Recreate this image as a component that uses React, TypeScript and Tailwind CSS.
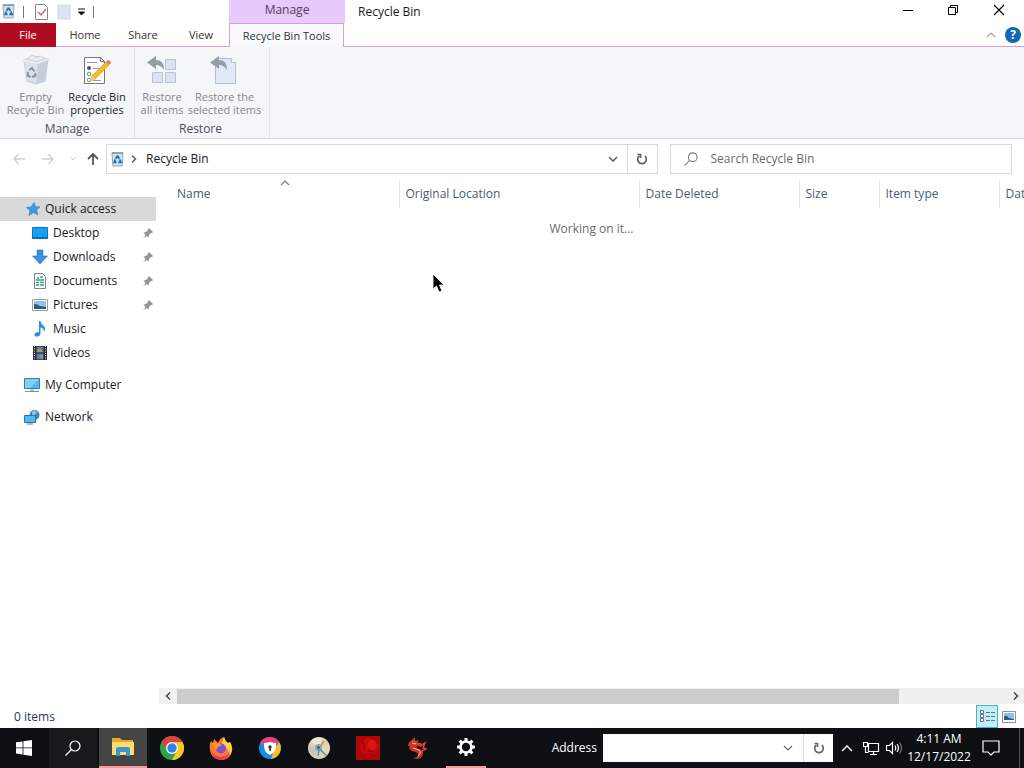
import React from "react";

type IconProps = { className?: string };

const RecycleIcon = ({ className }: IconProps) => (
  <svg className={className} width="13" height="15" viewBox="0 0 14 16">
    <path d="M1 1h12l-1 14H2z" fill="#d3e0ea" stroke="#93a3b2" />
    <path d="M1 1h12" stroke="#7d8f9f" strokeWidth="1.500" />
    <path d="M7 4l2 3.200M7 4L5 7.200M4.500 8L3.500 11H6M9.500 8l1.200 3H8" fill="none" stroke="#1674bd" strokeWidth="2" />
  </svg>
);

const BigBinIcon = () => (
  <svg width="28" height="32" viewBox="0 0 28 32">
    <path d="M2 6l10-4 14 3-3 22-9 3-9-3z" fill="#d0d8e6" stroke="#c0c8d6" />
    <path d="M2 6l13 3-1 20-9-3z" fill="#dce2ec" />
    <path d="M16 10l9-3-3 19-7 3z" fill="#c5cddd" />
    <path d="M2 6l13 3 11-4" fill="none" stroke="#f1f3f8" strokeWidth="1.500" />
    <path d="M5 5l5-4 4 2 5-1 4 3-8 3z" fill="#e9ecf2" stroke="#cbd1dc" />
    <path d="M7 16l3-2 2.500 3.500M6 18l-.500 3.500 3 1.500M10 23l3-1 .500-3" fill="none" stroke="#8491a8" strokeWidth="2" />
  </svg>
);

const PropertiesIcon = () => (
  <svg width="30" height="32" viewBox="0 0 30 32">
    <path d="M2.500 3.500h16l4 4v22h-20z" fill="#fff" stroke="#777" />
    <path d="M18.500 3.500v4h4" fill="none" stroke="#777" />
    <path d="M5 8.500h10M11 14.500h6M11 20.500h5M11 26.500h8" stroke="#999" />
    <circle cx="7" cy="14" r="2" fill="#555" />
    <circle cx="7" cy="20" r="1.800" fill="#fff" stroke="#4ba583" />
    <circle cx="7" cy="26" r="1.800" fill="#fff" stroke="#4ba583" />
    <path d="M8 27l2-5L24 8l3 3-14 14z" fill="#f6bd28" stroke="#d99a1c" strokeWidth=".7" />
    <path d="M24 8l1.500-1.500q2-1 3 1t-1 3L27 11z" fill="#e0736e" />
    <path d="M8 27l2-5 3 3z" fill="#eccf9b" />
  </svg>
);

const undoArrow = "M0 8.500L9 2v4q8 0 8 9v1q-3-5-8-5v4z";

const RestoreAllIcon = () => (
  <svg width="30" height="32" viewBox="0 0 30 32">
    <g fill="#dbe3f2" stroke="#b9c3d4">
      <path d="M18.500 5.500h10v10h-10zM5.500 18.500h10v10h-10zM18.500 18.500h10v10h-10z" />
    </g>
    <path d={undoArrow} fill="#949daa" />
  </svg>
);

const RestoreSelectedIcon = () => (
  <svg width="30" height="32" viewBox="0 0 30 32">
    <path d="M5.500 4.500h16l4 4v21h-20z" fill="#e2e9f6" stroke="#b3bdce" />
    <path d="M21.500 4.500v4h4" fill="#fff" stroke="#b3bdce" />
    <path d={undoArrow} fill="#949daa" />
  </svg>
);

const Search = ({ className, size = 14 }: IconProps & { size?: number }) => (
  <svg className={className} width={size} height={size} viewBox="0 0 16 16" fill="none" stroke="currentColor" strokeWidth="1.200">
    <circle cx="10" cy="6" r="5" />
    <path d="M6.500 9.500L.500 15.500" />
  </svg>
);

const Chevron = ({ d, className, weight = 1.6 }: { d: string; className?: string; weight?: number }) => (
  <svg className={className} width="12" height="12" viewBox="0 0 12 12" fill="none" stroke="currentColor" strokeWidth={weight}>
    <path d={d} />
  </svg>
);
const down = "M2 4l4 4 4-4";
const up = "M2 8l4-4 4 4";
const wideUp = "M1 9l5-5 5 5";
const left = "M8 2.500L4.500 6 8 9.500";
const right = "M4 2.500L7.500 6 4 9.500";

const Refresh = () => (
  <svg width="14" height="14" viewBox="0 0 14 14" fill="none" stroke="currentColor" strokeWidth="1.700">
    <path d="M10 4.200A4.300 4.300 0 1 1 4 4.200M2.500 2.500h3v3.500" />
  </svg>
);

const Pin = () => (
  <svg width="12" height="12" viewBox="0 0 12 12" fill="#8f979e">
    <path d="M7 1l4 4-1 1H9L7 8l-.500 2.500L4.500 9 1 11.500 3.500 8 1.500 5.500 4 5l2-2V2z" />
  </svg>
);

const icons: Record<string, React.ReactNode> = {
  star: <path d="M9 1.500l1.500 4 4.500.500-3.500 3 1.500 5-4.500-2.500L4 14.500l1-5L1.500 6.500 6 6z" fill="#3d9be0" stroke="#247bc0" strokeWidth=".6" />,
  desktop: <><path d="M.500 2.500h15v11H.500z" fill="#14a0f0" stroke="#0876c4" /><path d="M1 12.500h14" stroke="#075b99" strokeDasharray="2 1" /></>,
  downloads: <path d="M5 1h6v6h4.500L8 15 .500 7H5z" fill="#3a90d9" stroke="#2776bf" strokeWidth=".6" />,
  documents: <><path d="M2.500.500h8l3 3v12h-11z" fill="#fff" stroke="#7c8a88" /><path d="M5 5h2M8 4h3M4 7h8M4 9.500h3M8 9.500h4M4 12h3M8 12h4" stroke="#35a187" strokeWidth="1.300" /></>,
  pictures: <><path d="M.500 2.500h15v11H.500z" fill="#fff" stroke="#9aa2aa" /><path d="M2 4h12v8H2z" fill="#8fc5ed" /><path d="M2 7q4 0 6 2l6 1v2H2z" fill="#34587c" /></>,
  music: <path d="M7 0h1.500Q9 3.500 12 5q2 2 0 6 0-4-3.500-4.500V12q0 3-3 3.500Q2 16 2.500 13.500 3 11 7 11z" fill="#2195dc" />,
  videos: <><path d="M1 1h14v14H1z" fill="#282b34" /><path d="M4.500 1.500h7v6h-7zM4.500 8.500h7v6h-7z" fill="#6670b8" /><path d="M5 5l3-2 3 4H5zM6 11l5-1v4z" fill="#93a846" /><path d="M2.500 1v14M13.500 1v14" stroke="#e8e8e8" strokeDasharray="1 1.300" /></>,
  computer: <><path d="M.500 1.500h15v10H.500z" fill="#58b7eb" stroke="#2f7fae" /><path d="M1 2h14L6 11H1z" fill="#83cff6" /><path d="M6 13h4M1 14.500h14" stroke="#77909e" /></>,
  network: <><circle cx="10.500" cy="6" r="5" fill="#3c89b5" /><path d="M8 3q3-3 5 0l-2 3-3 0z" fill="#8dc3d7" /><path d="M.500 6.500h11v7H.500z" fill="#54b7ee" stroke="#2476ac" /><path d="M3 15h6" stroke="#54748a" /></>,
};

const NavIcon = ({ name }: { name: string }) => (
  <svg className="shrink-0" width="16" height="16" viewBox="0 0 16 16">{icons[name]}</svg>
);

const places = [
  ["desktop", "Desktop", true],
  ["downloads", "Downloads", true],
  ["documents", "Documents", true],
  ["pictures", "Pictures", true],
  ["music", "Music", false],
  ["videos", "Videos", false],
] as const;

function RibbonButton({ icon, lines, disabled, width }: { icon: React.ReactNode; lines: string[]; disabled?: boolean; width: string }) {
  return (
    <button disabled={disabled} className={`flex flex-col items-center whitespace-nowrap pt-[7px] text-[11px] leading-[13px] ${width} ${disabled ? "text-[#858588]" : "text-[#222]"}`}>
      {icon}
      <span className="mt-1">{lines[0]}</span>
      <span>{lines[1]}</span>
    </button>
  );
}

function TaskButton({ label, children, state = "" }: { label: string; children: React.ReactNode; state?: string }) {
  return (
    <button aria-label={label} className={`flex h-10 w-12 shrink-0 items-center justify-center ${state}`}>
      {children}
    </button>
  );
}

export default function App() {
  return (
    <div className="flex min-h-screen flex-col overflow-hidden bg-white font-['Open_Sans','Noto_Sans',sans-serif] text-[12px] leading-4 text-[#1a1a1a]">
      <header>
        <div className="flex h-[23px]">
          <div className="flex w-[229px] shrink-0 items-center pl-[2px]">
            <RecycleIcon />
            <span className="ml-2 h-3 w-px bg-[#777]" />
            <button aria-label="Properties" className="ml-[11px]">
              <svg width="13" height="16" viewBox="0 0 13 16"><path d="M.500.500h9l3 3v12H.500z" fill="#fff" stroke="#888" /><path d="M3 8l3 3 5-6" fill="none" stroke="#e0654f" strokeWidth="1.500" /></svg>
            </button>
            <button aria-label="New folder" className="ml-[9px]">
              <svg width="14" height="16" viewBox="0 0 14 16"><path d="M1 1h12v14H1z" fill="#dbe4ef" stroke="#cbd5e1" /></svg>
            </button>
            <button aria-label="Customize Quick Access Toolbar" className="ml-[6px]">
              <svg width="9" height="8" viewBox="0 0 9 8"><path d="M1 1h7M1.500 4h6L4.500 7z" fill="#111" stroke="#111" /></svg>
            </button>
            <span className="ml-[7px] h-3 w-px bg-[#777]" />
          </div>
          <div className="w-[116px] shrink-0 bg-[#e8c9fb] pt-[2px] text-center text-[#51405f]">Manage</div>
          <h1 className="ml-[13px] flex-1 pt-1">Recycle Bin</h1>
          <div className="flex items-start pr-px text-black">
            <button aria-label="Minimize" className="flex h-5 w-[45px] items-center justify-center"><svg width="10" height="10"><path d="M0 5.500h10" stroke="currentColor" /></svg></button>
            <button aria-label="Restore" className="flex h-5 w-[45px] items-center justify-center"><svg width="10" height="10" fill="none" stroke="currentColor"><path d="M.500 2.500h7v7h-7zM2.500 2.500v-2h7v7h-2" /></svg></button>
            <button aria-label="Close" className="flex h-5 w-12 items-center justify-center"><svg width="12" height="12" stroke="currentColor" strokeWidth="1.200"><path d="M1 1l10 10M11 1L1 11" /></svg></button>
          </div>
        </div>
        <nav className="flex h-6 items-stretch text-[11px]" aria-label="Ribbon tabs">
          <button className="w-14 bg-[#b10d22] text-white">File</button>
          {["Home", "Share", "View"].map((t) => (
            <button key={t} className="w-[58px] border-b border-[#d5a0e0] text-[#333]">{t}</button>
          ))}
          <button className="-ml-px w-[115px] whitespace-nowrap border-x border-t border-[#d5a0e0] bg-[#f8f9fb] text-[#333]">Recycle Bin Tools</button>
          <div className="flex flex-1 items-center justify-end gap-2 border-b border-[#d5a0e0] pr-[3px]">
            <button aria-label="Collapse ribbon" className="text-[#a5a5a5]"><Chevron d={up} weight={1.2} /></button>
            <button aria-label="Help" className="h-4 w-4 rounded-full bg-[#1267b8] text-[12px] font-bold leading-4 text-white">?</button>
          </div>
        </nav>
        <div className="flex h-[92px] border-b border-[#d9dadd] bg-[#f5f6f9]">
          <section className="flex w-[135px] flex-col border-r border-[#e4e5e8]">
            <div className="flex pl-[5px]">
              <RibbonButton width="w-[61px]" disabled icon={<BigBinIcon />} lines={["Empty", "Recycle Bin"]} />
              <RibbonButton width="w-[62px]" icon={<PropertiesIcon />} lines={["Recycle Bin", "properties"]} />
            </div>
            <p className="mt-[5px] text-center text-[#505055]">Manage</p>
          </section>
          <section className="flex w-[135px] flex-col border-r border-[#e4e5e8]">
            <div className="flex pl-[3px]">
              <RibbonButton width="w-[48px]" disabled icon={<RestoreAllIcon />} lines={["Restore", "all items"]} />
              <RibbonButton width="w-[77px]" disabled icon={<RestoreSelectedIcon />} lines={["Restore the", "selected items"]} />
            </div>
            <p className="mt-[5px] pr-[3px] text-center text-[#505055]">Restore</p>
          </section>
        </div>
      </header>

      <div className="flex h-[41px] items-start pr-3 pt-[5px]">
        <div className="flex h-[30px] w-[106px] shrink-0 items-center pl-3">
          {["M13 7H2M6.500 2L2 7l4.500 5", "M1 7h11M7.500 2L12 7l-4.500 5"].map((d, i) => (
            <button key={d} aria-label={i ? "Forward" : "Back"} className="mr-[15px] text-[#d0d0d0]">
              <svg width="14" height="14" fill="none" stroke="currentColor" strokeWidth="1.400"><path d={d} /></svg>
            </button>
          ))}
          <button aria-label="Recent locations" className="text-[#ccc]"><svg width="6" height="4"><path d="M0 0l3 3 3-3" fill="none" stroke="currentColor" /></svg></button>
          <button aria-label="Up" className="ml-[10px] text-[#555]"><svg width="14" height="14" fill="none" stroke="currentColor" strokeWidth="1.800"><path d="M7 13V2M2 7l5-5 5 5" /></svg></button>
        </div>
        <div className="flex h-[30px] flex-[552_1_0%] items-center border border-[#d9d9d9]">
          <RecycleIcon className="ml-1" />
          <Chevron d={right} className="ml-1 text-[#666]" />
          <button className="ml-[6px] flex-1 text-left">Recycle Bin</button>
          <button aria-label="Previous locations" className="mr-2 text-[#666]"><Chevron d={down} /></button>
          <button aria-label="Refresh" className="flex h-full w-[30px] items-center justify-center border-l border-[#d9d9d9] text-[#606060]"><Refresh /></button>
        </div>
        <label className="ml-3 flex h-[30px] flex-[342_1_0%] items-center border border-[#d9d9d9] text-[#777]">
          <Search className="ml-[13px] shrink-0" />
          <input aria-label="Search Recycle Bin" placeholder="Search Recycle Bin" className="ml-[13px] min-w-0 flex-1 outline-none placeholder:text-[#6b6b6b]" />
        </label>
      </div>

      <main className="flex flex-1">
        <nav className="w-[156px] shrink-0 pt-[17px]" aria-label="Folders">
          <a href="#quick" className="flex h-6 items-center gap-1 bg-[#d9d9d9] pl-[25px]"><NavIcon name="star" />Quick access</a>
          {places.map(([icon, label, pinned]) => (
            <a key={label} href={`#${icon}`} className="flex h-6 items-center gap-[5px] pl-8 pr-[2px]">
              <NavIcon name={icon} />
              <span className="flex-1">{label}</span>
              {pinned && <Pin />}
            </a>
          ))}
          <a href="#computer" className="mt-2 flex h-6 items-center gap-[5px] pl-6"><NavIcon name="computer" />My Computer</a>
          <a href="#network" className="mt-2 flex h-6 items-center gap-[5px] pl-6"><NavIcon name="network" />Network</a>
        </nav>
        <section className="ml-[3px] flex min-w-0 flex-1 flex-col">
          <table className="w-full table-fixed text-left">
            <thead>
              <tr className="h-7 text-[#4c5a74]">
                <th className="relative w-[240px] border-r border-[#e5e5e5] pl-[18px] font-normal">
                  Name
                  <Chevron d={up} weight={1.1} className="absolute left-[120px] top-[-3px] text-[#777]" />
                </th>
                <th className="w-[240px] border-r border-[#e5e5e5] pl-[6px] font-normal">Original Location</th>
                <th className="w-[160px] border-r border-[#e5e5e5] pl-[6px] font-normal">Date Deleted</th>
                <th className="w-[80px] border-r border-[#e5e5e5] pl-[6px] font-normal">Size</th>
                <th className="w-[120px] border-r border-[#e5e5e5] pl-[6px] font-normal">Item type</th>
                <th className="overflow-hidden whitespace-nowrap pl-[6px] font-normal">Dat</th>
              </tr>
            </thead>
            <tbody>
              <tr><td colSpan={6} className="pt-[13px] text-center text-[#6d6d6d]">Working on it...</td></tr>
            </tbody>
          </table>
          <div className="relative flex-1">
            <svg className="absolute left-[273px] top-9" width="13" height="21" viewBox="0 0 13 21"><path d="M1 1v15l3.500-3L7 19l3-1-2.500-6H12z" fill="#000" stroke="#fff" strokeWidth=".8" /></svg>
          </div>
          <div className="mb-px flex h-4 items-center bg-[#f0f0f0] text-[#505050]">
            <button aria-label="Scroll left" className="flex w-[18px] justify-center"><Chevron d={left} /></button>
            <div className="h-[15px] flex-1"><div className="h-full w-[87%] bg-[#cdcdcd]" /></div>
            <button aria-label="Scroll right" className="flex w-[17px] justify-center"><Chevron d={right} /></button>
          </div>
        </section>
      </main>

      <div className="flex h-[23px] items-center pl-[14px] pr-1 text-[#2b3550]">
        <span className="flex-1">0 items</span>
        <button aria-label="Details view" className="flex h-[23px] w-[22px] items-center justify-center border border-[#3fb5cf] bg-[#c5edf7]">
          <svg width="17" height="13" viewBox="0 0 17 13" fill="none" stroke="#657583"><path d="M1.500.500h3v3h-3zM1.500 4.500h3v3h-3zM1.500 8.500h3v3h-3z" fill="#fff" /><path d="M7 2.500h4M12 2.500h4M7 6.500h4M12 6.500h4M7 10.500h4M12 10.500h4" /></svg>
        </button>
        <button aria-label="Large icons view" className="ml-1 flex h-[22px] w-[18px] items-center">
          <svg width="14" height="12" viewBox="0 0 14 12"><path d="M.500.500h13v11H.500z" fill="#fff" stroke="#8a929b" /><path d="M2 2h10v7H2z" fill="#8dc0e4" /><path d="M2 5q3-1 5 2l5 1v1H2z" fill="#305b87" /></svg>
        </button>
      </div>

      <footer className="flex h-10 items-center bg-[#0d0f12] text-white">
        <div className="flex gap-px">
          <TaskButton label="Start">
            <svg width="16" height="16" viewBox="0 0 16 16" fill="#fff"><path d="M0 2.300l6.600-.900v6.100H0zM7.400 1.300L16 0v7.500H7.400zM0 8.300h6.600v6.100L0 13.500zM7.400 8.300H16V16l-8.600-1.300z" /></svg>
          </TaskButton>
          <TaskButton label="Search" state="bg-[#17191b]"><Search size={16} /></TaskButton>
          <TaskButton label="File Explorer" state="ml-px border-b-2 border-[#f29a9e] bg-[#454545]">
            <svg width="22" height="20" viewBox="0 0 22 20"><path d="M0 1h8l2 2h11v15H0z" fill="#e6a829" /><path d="M0 5h22v13H0z" fill="#ffdc70" /><path d="M4 19v-7q0-2 2-2h10q2 0 2 2v7h-4v-4H8v4z" fill="#3d94d3" /></svg>
          </TaskButton>
          <TaskButton label="Chrome">
            <svg width="24" height="24" viewBox="0 0 24 24"><circle cx="12" cy="12" r="12" fill="#30a14e" /><path d="M1.600 6A12 12 0 0 1 22.400 6L12 8 8 15z" fill="#e24336" /><path d="M22.400 6A12 12 0 0 1 12 24l5-9-2-9z" fill="#fbc926" /><circle cx="12" cy="12" r="6" fill="#fff" /><circle cx="12" cy="12" r="4.700" fill="#3580e8" /></svg>
          </TaskButton>
          <TaskButton label="Firefox">
            <svg width="24" height="24" viewBox="0 0 24 24"><path d="M2 5l2 2 1-4 4 4q2-5 6-6 1 4 4 6l2-1q4 6 1 12-3 6-10 6Q2 23 1 14 0 9 2 5z" fill="#ff7a2f" /><path d="M15 1q1 4 4 6l2-1q4 7 0 13-3-9-8-11z" fill="#ffd145" /><path d="M2 13q2 8 10 8 7 0 9-7-1 10-9 10Q3 23 2 13z" fill="#f2355c" /><circle cx="12" cy="12.500" r="5" fill="#7956cd" /><path d="M4 7q4-1 9 2l-4 2-2 3q-3-3-3-7z" fill="#ff982e" /></svg>
          </TaskButton>
          <TaskButton label="Secure Browser">
            <svg width="22" height="22" viewBox="0 0 22 22"><circle cx="11" cy="11" r="11" fill="#168de2" /><path d="M1 6A11 11 0 0 1 20 5l-5 5z" fill="#ec3f7b" /><path d="M20 5a11 11 0 0 1-8 17l3-9z" fill="#f6bd2c" /><path d="M11 5q3 1 6 1 1 9-6 12Q4 15 5 6q3 0 6-1z" fill="#fff" /><circle cx="11" cy="10" r="1.700" fill="#333" /><path d="M11 10v4" stroke="#333" strokeWidth="1.500" /></svg>
          </TaskButton>
          <TaskButton label="Disc tool">
            <svg width="22" height="22" viewBox="0 0 22 22"><circle cx="11" cy="11" r="11" fill="#ddd3b9" /><path d="M11 11L3 4q5-5 11-3z" fill="#ece6d6" /><path d="M11 11l10-3q2 5-3 11z" fill="#e5d9bc" /><path d="M11 11L1 9q-1 6 5 11z" fill="#c9c5bd" /><circle cx="10.500" cy="10.500" r="3.500" fill="#8ba3b0" /><circle cx="10.500" cy="10.500" r="1.300" fill="#454e55" /><path d="M11.500 12l7 6.500M11 13l-1 6" stroke="#4d8fc0" strokeWidth="1.500" /><path d="M12 10l4-6" stroke="#c99654" strokeWidth="1.500" /></svg>
          </TaskButton>
          <TaskButton label="Red application">
            <svg width="24" height="24" viewBox="0 0 24 24"><path d="M0 0h24v24H0z" fill="#b00608" /><ellipse cx="13" cy="11" rx="9" ry="9" fill="#cb0a0c" /><ellipse cx="16" cy="9" rx="4" ry="5" fill="#dc1515" /><path d="M6 5q3 4 2 9M12 14q4 3 7 1M9 19q5-2 9 1" fill="none" stroke="#9c0508" strokeWidth="1.500" /></svg>
          </TaskButton>
          <TaskButton label="Dragon">
            <svg width="20" height="24" viewBox="0 0 20 24"><path d="M1 10q0-4 4-6l3-3 0 4 4-1-2 3 5 0-2 2 2 2-4-1-2 2q7 1 7 5t-5 6l-6-1q7-1 6-4-1-2-6-3-4-2-2-5z" fill="#c93425" /><path d="M5 4l4 3 5 1M13 10l5-3-2 5 3 1-4 2" fill="none" stroke="#dd4831" strokeWidth="1.500" /><path d="M5 7l4 1M6 12l6 2q3 3-1 6" fill="none" stroke="#edc6a1" /></svg>
          </TaskButton>
          <TaskButton label="Settings">
            <span className="flex h-10 w-10 items-center justify-center border-b-2 border-[#f29a9e]">
              <svg width="20" height="20" viewBox="0 0 20 20" fill="none" stroke="#fff"><circle cx="10" cy="10" r="5.500" strokeWidth="2.600" /><path d="M10 1v3M10 16v3M1 10h3M16 10h3M3.600 3.600L6 6M14 14l2.400 2.400M3.600 16.400L6 14M14 6l2.400-2.400" strokeWidth="3" /></svg>
            </span>
          </TaskButton>
        </div>
        <label htmlFor="address" className="ml-auto pr-[6px]">Address</label>
        <div className="flex h-7 w-[230px] shrink-0 items-center bg-white text-[#666]">
          <input id="address" className="h-full min-w-0 flex-1 px-2 outline-none" />
          <button aria-label="Address history" className="mr-[9px]"><Chevron d={down} weight={1.2} /></button>
          <button aria-label="Go" className="flex h-full w-[30px] items-center justify-center border-l border-[#ddd]"><Refresh /></button>
        </div>
        <button aria-label="Show hidden icons" className="ml-2"><Chevron d={wideUp} weight={1.4} /></button>
        <button aria-label="Network status" className="ml-[10px]">
          <svg width="17" height="15" viewBox="0 0 17 15" fill="none" stroke="#fff"><path d="M5.500 2.500h10v8h-10zM7 13.500h7M10.500 11v3M.500 1.500h4v4h-4zM2.500 6v5.500h3" strokeWidth="1.200" /></svg>
        </button>
        <button aria-label="Volume" className="ml-[6px]">
          <svg width="17" height="16" viewBox="0 0 17 16" fill="none" stroke="#fff" strokeWidth="1.200"><path d="M.500 5.500h3l3-3v11l-3-3h-3zM9 5.500q1.500 2.500 0 5M11 4q3 4 0 8" /><path d="M13.500 2.500q4 5.500 0 11" stroke="#777" /></svg>
        </button>
        <time className="ml-1 w-[64px] whitespace-nowrap text-center leading-[18px]">4:11 AM<br />12/17/2022</time>
        <button aria-label="Notifications" className="ml-[11px] mr-[19px]">
          <svg width="18" height="17" viewBox="0 0 18 17" fill="none" stroke="#fff" strokeWidth="1.200"><path d="M1 1h16v11h-5l-3 3-3-3H1z" /></svg>
        </button>
        <span className="h-10 w-px bg-[#555]" />
        <span className="w-1" />
      </footer>
    </div>
  );
}
